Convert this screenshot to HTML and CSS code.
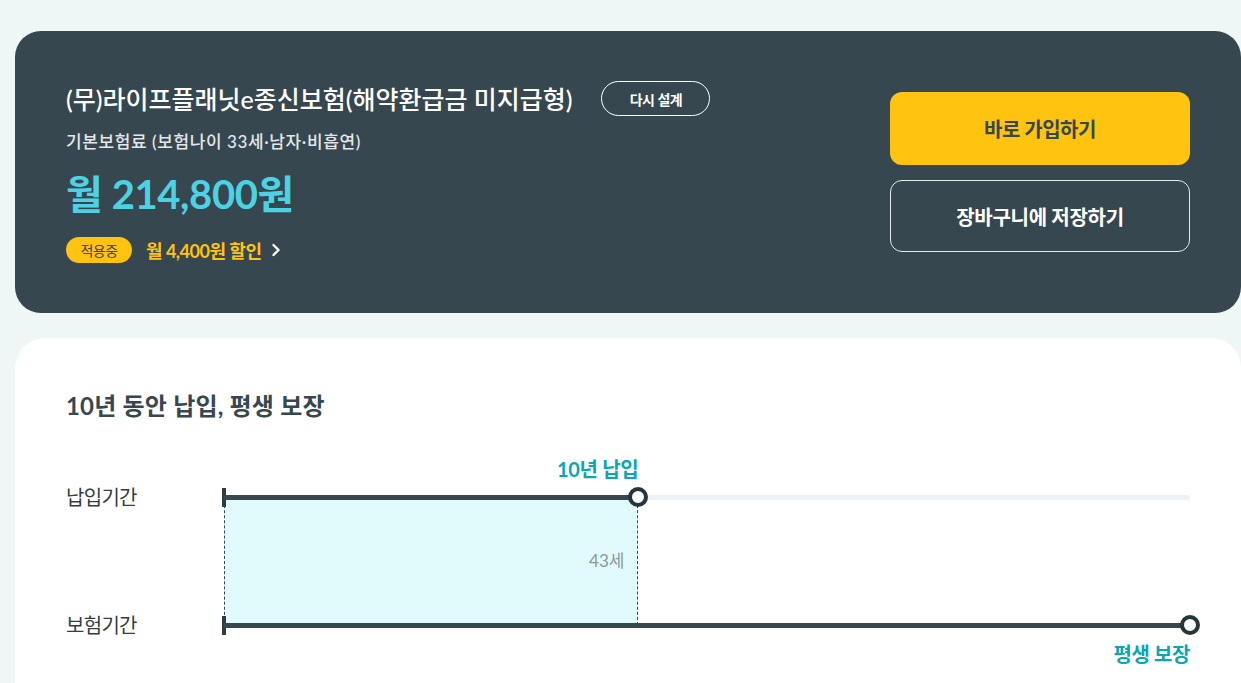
FILE: index.html
```html
<!DOCTYPE html>
<html lang="ko">
<head>
<meta charset="utf-8">
<title>라이프플래닛 e종신보험</title>
<link rel="stylesheet" href="styles.css">
</head>
<body>
<main class="page">
  <section class="summary">
    <div class="summary-info">
      <div class="title-row">
        <h1 class="product-title">(무)라이프플래닛e종신보험(해약환급금 미지급형)</h1>
        <button class="redesign-btn">다시 설계</button>
      </div>
      <p class="premium-label">기본보험료 (보험나이 33세·남자·비흡연)</p>
      <p class="price">월 214,800원</p>
      <div class="discount-row">
        <span class="badge">적용중</span>
        <span class="discount">월 4,400원 할인</span>
        <svg class="chevron" width="10" height="14" viewBox="0 0 10 14"><polyline points="2.5,2 7.5,7 2.5,12" fill="none" stroke="#ffffff" stroke-width="2.4" stroke-linecap="round" stroke-linejoin="round"/></svg>
      </div>
    </div>
    <div class="summary-actions">
      <button class="btn btn-primary">바로 가입하기</button>
      <button class="btn btn-outline">장바구니에 저장하기</button>
    </div>
  </section>

  <section class="detail">
    <h2 class="detail-title">10년 동안 납입, 평생 보장</h2>
    <div class="chart">
      <div class="cell-empty"></div>
      <div class="pay-end-wrap"><div class="pay-end-label" style="width: 42.9%">10년 납입</div></div>

      <div class="row-label">납입기간</div>
      <div class="track track-pay">
        <span class="tick"></span>
        <div class="fill" style="width: 42.9%"><span class="dot"></span></div>
      </div>

      <div class="cell-empty"></div>
      <div class="region-wrap"><div class="region" style="width: 42.9%"><span class="age">43세</span></div></div>

      <div class="row-label">보험기간</div>
      <div class="track track-cover">
        <span class="tick"></span>
        <div class="fill" style="width: 100%"><span class="dot"></span></div>
      </div>

      <div class="cell-empty"></div>
      <div class="cover-label">평생 보장</div>
    </div>
  </section>
</main>
</body>
</html>
```

FILE: styles.css
```css
* { box-sizing: border-box; }

html, body {
  margin: 0;
  padding: 0;
  background: #eff7f6;
}

body {
  font-family: Lato, "Noto Sans CJK KR", "Noto Sans", sans-serif;
  color: #37474f;
}

.page {
  padding: 31px 0 0 15px;
  display: flex;
  flex-direction: column;
  gap: 25px;
}

/* ---------- summary card ---------- */
.summary {
  background: #37474f;
  border-radius: 26px;
  height: 282px;
  padding: 50px 51px 50px 51px;
  display: flex;
  justify-content: space-between;
  align-items: center;
}

.summary-info {
  align-self: flex-start;
  display: flex;
  flex-direction: column;
}

.title-row {
  display: flex;
  align-items: center;
  height: 35px;
}

.product-title {
  margin: 0;
  font-size: 25px;
  font-weight: 500;
  line-height: 34px;
  color: #ffffff;
  letter-spacing: 0;
}

.redesign-btn {
  margin-left: 29px;
  height: 35px;
  width: 109px;
  border: 1px solid #ffffff;
  border-radius: 18px;
  background: transparent;
  color: #ffffff;
  font-family: inherit;
  font-size: 14px;
  font-weight: 700;
  letter-spacing: -0.5px;
  padding: 0;
}

.premium-label {
  margin: 14px 0 0;
  font-size: 17px;
  line-height: 24px;
  color: #e3e7e9;
  letter-spacing: 0.6px;
  font-weight: 500;
}

.price {
  margin: 16px 0 0;
  font-size: 40px;
  line-height: 48px;
  font-weight: 700;
  color: #4dd2e3;
  letter-spacing: -0.4px;
}

.discount-row {
  margin-top: 19px;
  display: flex;
  align-items: center;
  height: 26px;
}

.badge {
  background: #ffc310;
  color: #37474f;
  border-radius: 13px;
  height: 26px;
  width: 66px;
  display: inline-flex;
  align-items: center;
  justify-content: center;
  font-size: 14px;
  letter-spacing: -0.5px;
}

.discount {
  margin-left: 14px;
  color: #ffc310;
  font-size: 18px;
  font-weight: 700;
  letter-spacing: -0.5px;
}

.chevron {
  margin-left: 10px;
}

.summary-actions {
  display: flex;
  flex-direction: column;
  gap: 15px;
  width: 300px;
}

.btn {
  width: 300px;
  border-radius: 12px;
  font-family: inherit;
  font-size: 20px;
  font-weight: 700;
}

.btn-primary {
  height: 73px;
  background: #ffc310;
  border: none;
  color: #37474f;
  letter-spacing: -0.5px;
}

.btn-outline {
  height: 72px;
  background: transparent;
  border: 1px solid #e8ecee;
  color: #ffffff;
  letter-spacing: -0.3px;
}

/* ---------- detail card ---------- */
.detail {
  background: #ffffff;
  border-radius: 30px 30px 0 0;
  padding: 52px 51px 30px 51px;
  min-height: 360px;
}

.detail-title {
  margin: 0;
  font-size: 24px;
  line-height: 32px;
  font-weight: 700;
  color: #37474f;
  letter-spacing: 0.2px;
}

.chart {
  margin-top: 35px;
  display: grid;
  grid-template-columns: 158px 1fr;
  grid-template-rows: 30px 20px 108px 20px 34px;
  row-gap: 0;
}

.pay-end-label {
  text-align: right;
  font-size: 20px;
  line-height: 24px;
  font-weight: 700;
  color: #0aa6b4;
  letter-spacing: -0.3px;
}

.row-label {
  font-size: 20px;
  line-height: 20px;
  color: #333d42;
  letter-spacing: -0.7px;
  display: flex;
  align-items: center;
}

.track {
  position: relative;
  align-self: center;
  height: 5px;
  border-radius: 3px;
  z-index: 2;
}

.track-pay {
  background: #ebf2f5;
}

.tick {
  position: absolute;
  left: -2px;
  top: -7px;
  width: 4px;
  height: 19px;
  background: #2d3d43;
}

.fill {
  position: relative;
  height: 5px;
  background: #37474f;
}

.dot {
  position: absolute;
  right: -10px;
  top: -7.5px;
  width: 20px;
  height: 20px;
  border-radius: 50%;
  border: 4.5px solid #24363c;
  background: #ffffff;
}

.region-wrap {
  margin-top: -7px;
  margin-bottom: -10px;
  position: relative;
  z-index: 1;
}

.region {
  height: 100%;
  background: #e1fbfd;
  border-left: 1px dashed #37474f;
  border-right: 1px dashed #37474f;
  display: flex;
  align-items: center;
  justify-content: flex-end;
  padding-right: 13px;
}

.age {
  font-size: 17px;
  color: #8a979b;
  letter-spacing: 0;
  margin-top: -6px;
}

.cover-label {
  text-align: right;
  font-size: 20px;
  line-height: 24px;
  font-weight: 700;
  color: #0aa6b4;
  letter-spacing: -0.4px;
  padding-top: 7px;
}
```
